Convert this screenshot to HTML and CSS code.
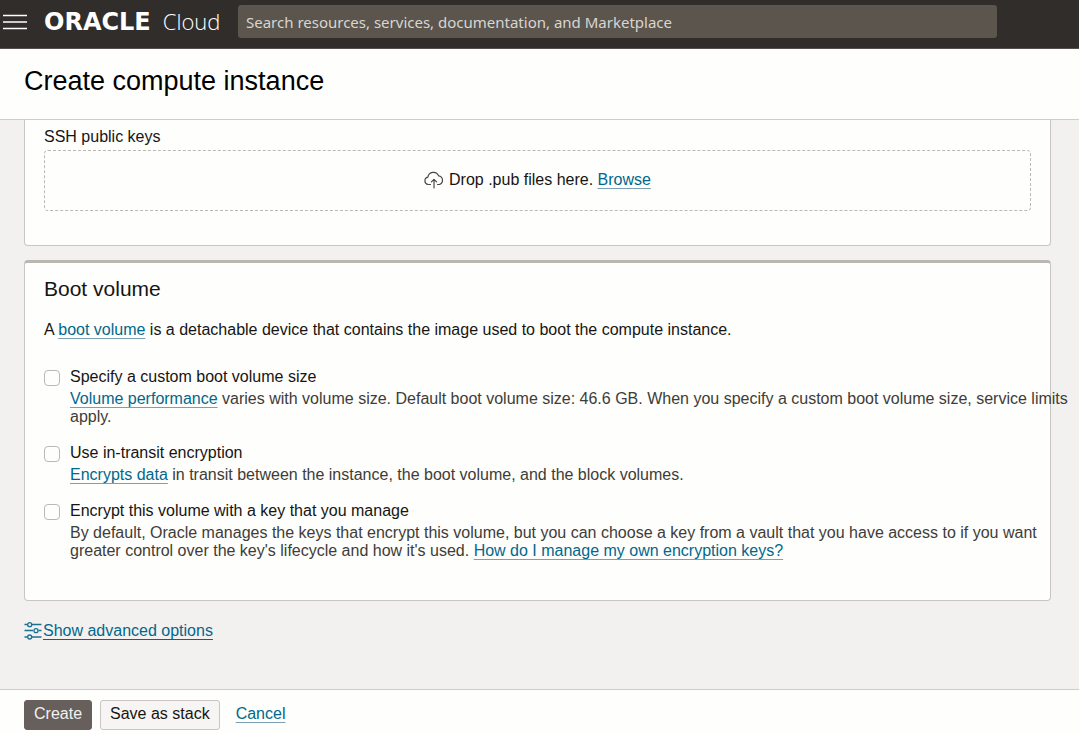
FILE: index.html
```html
<!DOCTYPE html>
<html lang="en">
<head>
<meta charset="utf-8">
<title>Create compute instance</title>
<link rel="stylesheet" href="styles.css">
</head>
<body>
<header class="topbar">
  <button class="menu" type="button" aria-label="Open navigation menu">
    <svg width="24" height="16" viewBox="0 0 24 16" fill="none" stroke="#fff" stroke-width="1.6"><path d="M0 1.500h24M0 8h24M0 14.500h24"/></svg>
  </button>
  <a class="brand" href="#"><span class="brand-name">ORACLE</span><span class="brand-product">Cloud</span></a>
  <input class="search" type="search" aria-label="Search" placeholder="Search resources, services, documentation, and Marketplace">
</header>
<div class="titlebar"><h1>Create compute instance</h1></div>
<main class="content">
  <section class="card card-ssh">
    <p class="field-label">SSH public keys</p>
    <div class="dropzone">
      <svg width="20" height="18" viewBox="0 0 20 18" fill="none" stroke="#4a4642" stroke-width="1.200" stroke-linecap="round" stroke-linejoin="round"><path d="M6.500 13.500H4.200A3.700 3.700 0 0 1 3.900 6.200 5.600 5.600 0 0 1 14.600 4.800a4.500 4.500 0 0 1 .900 8.700h-2M10 17V8.500M7.400 10.900L10 8.300l2.600 2.600"/></svg>
      <span>Drop .pub files here. <a href="#">Browse</a></span>
    </div>
  </section>
  <section class="card card-boot">
    <h2>Boot volume</h2>
    <p class="intro">A <a href="#">boot volume</a> is a detachable device that contains the image used to boot the compute instance.</p>
    <div class="options">
      <div class="option">
        <input type="checkbox" id="custom-size">
        <div>
          <label for="custom-size">Specify a custom boot volume size</label>
          <p class="help"><a href="#">Volume performance</a> varies with volume size. Default boot volume size: 46.6 GB. When you specify a custom boot volume size, service limits apply.</p>
        </div>
      </div>
      <div class="option">
        <input type="checkbox" id="in-transit">
        <div>
          <label for="in-transit">Use in-transit encryption</label>
          <p class="help"><a href="#">Encrypts data</a> in transit between the instance, the boot volume, and the block volumes.</p>
        </div>
      </div>
      <div class="option">
        <input type="checkbox" id="own-key">
        <div>
          <label for="own-key">Encrypt this volume with a key that you manage</label>
          <p class="help">By default, Oracle manages the keys that encrypt this volume, but you can choose a key from a vault that you have access to if you want greater control over the key's lifecycle and how it's used. <a href="#">How do I manage my own encryption keys?</a></p>
        </div>
      </div>
    </div>
  </section>
  <div class="advanced">
    <svg width="19" height="18" viewBox="0 0 19 18" fill="none" stroke="#1f6f90" stroke-width="1.300"><path d="M.5 2.500h3M8 2.500h9.500M.5 8.500h8.500M14.500 8.500h3M.5 15h3M8 15h9.500"/><circle cx="5.700" cy="2.700" r="2"/><circle cx="12" cy="8.700" r="2"/><circle cx="5.700" cy="15" r="2"/></svg>
    <a href="#">Show advanced options</a>
  </div>
</main>
<footer class="actions">
  <button class="btn btn-primary" type="button">Create</button>
  <button class="btn" type="button">Save as stack</button>
  <a class="cancel" href="#">Cancel</a>
</footer>
</body>
</html>
```

FILE: styles.css
```css
* { box-sizing: border-box; }
body {
  margin: 0;
  min-height: 100vh;
  display: flex;
  flex-direction: column;
  background: #f3f1f0;
  color: #161513;
  font: 16px/18px "Liberation Sans", Arial, sans-serif;
}
h1, h2, p { margin: 0; font-weight: 400; }
a {
  color: #00688c;
  text-decoration: underline 1px #7d9fb3;
  text-underline-offset: 3px;
  text-decoration-skip-ink: none;
}
.topbar {
  display: flex;
  align-items: center;
  height: 49px;
  padding: 0 82px 5px 3px;
  background: #312d2a;
  border-bottom: 1px solid #55504c;
}
.menu { display: flex; padding: 0; border: 0; background: none; }
.brand {
  display: flex;
  align-items: baseline;
  gap: 12px;
  width: 194px;
  margin-left: 17px;
  color: #fff;
  line-height: 30px;
  text-decoration: none;
}
.brand-name { font-family: "DejaVu Sans", sans-serif; font-size: 24px; font-weight: 700; }
.brand-product { font-family: "Open Sans", sans-serif; font-size: 22px; font-weight: 300; }
.search {
  flex: 1;
  height: 33px;
  padding: 0 8px;
  border: 0;
  border-radius: 3px;
  background: #5b554e;
  color: #fff;
  font: 15px "Noto Sans", sans-serif;
}
.search::placeholder { color: #d9d5d0; opacity: 1; }
.titlebar { padding: 16px 24px 21px; background: #fefefc; border-bottom: 1px solid #cfccc9; }
h1 { font-size: 27px; line-height: 33px; color: #000; }
.content { flex: 1; padding: 0 28px 24px 24px; }
.card { background: #fefefc; border: 1px solid #c9c5c2; border-radius: 4px; padding: 0 19px; }
.card-ssh { border-top: 0; border-radius: 0 0 4px 4px; padding-top: 8px; padding-bottom: 34px; }
.field-label { padding-bottom: 4px; }
.dropzone {
  display: flex;
  align-items: center;
  justify-content: center;
  gap: 5px;
  height: 61px;
  padding-bottom: 2px;
  border: 1px dashed #bcb8b4;
  border-radius: 4px;
}
.card-boot { margin-top: 14px; padding-top: 14px; padding-bottom: 40px; border-top: 3px solid #bcb6b1; }
h2 { font-size: 21px; line-height: 24px; }
.intro { margin-top: 20px; }
.options { display: grid; gap: 18px; margin: 29px -45px 0 0; }
.option { display: grid; grid-template-columns: 16px 1fr; gap: 10px; }
.option input {
  appearance: none;
  width: 16px;
  height: 16px;
  margin: 2px 0 0;
  border: 1px solid #bdb8b5;
  border-radius: 4px;
  background: #fefefc;
}
.option input:checked { background: #00688c; }
.option label { display: block; }
.help { margin-top: 4px; color: #403c38; }
.advanced { display: flex; align-items: center; margin-top: 21px; }
.advanced a { text-decoration-color: #00688c; }
.actions {
  display: flex;
  align-items: center;
  gap: 8px;
  padding: 10px 24px 3px;
  background: #fefefc;
  border-top: 1px solid #cfccc9;
}
.btn {
  height: 30px;
  padding: 0 9px 3px;
  border: 1px solid #cbc6c3;
  border-radius: 3px;
  background: #f7f5f4;
  color: #161513;
  font: 16px/18px "Liberation Sans", Arial, sans-serif;
}
.btn-primary { border-color: #665f5b; background: #665f5b; color: #f3f1ef; }
.cancel { margin: 0 0 2px 8px; }
```
